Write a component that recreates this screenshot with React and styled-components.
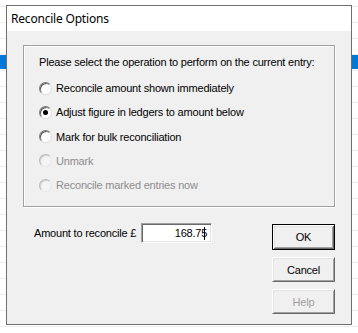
import React from 'react';
import styled, { createGlobalStyle } from 'styled-components';

const GlobalStyle = createGlobalStyle`
  html, body {
    margin: 0;
    padding: 0;
    background: #ffffff;
  }
  body {
    font-family: "Liberation Sans", Arial, sans-serif;
    font-size: 11px;
    letter-spacing: -0.2px;
    color: #000000;
  }
`;

const Desktop = styled.div`
  width: 358px;
  height: 333px;
  box-sizing: border-box;
  padding: 5px 0 0 6px;
  background:
    linear-gradient(#0078d7, #0078d7) 0 55px / 100% 14px no-repeat,
    repeating-linear-gradient(
      to bottom,
      #ececec 0px,
      #ececec 1px,
      #ffffff 1px,
      #ffffff 16px
    ) 0 6px / 100% 100%;
`;

const Dialog = styled.div`
  width: 346px;
  height: 320px;
  box-sizing: border-box;
  border: 1px solid #6f6f6f;
  background: #f0f0f0;
  display: flex;
  flex-direction: column;
`;

const TitleBar = styled.div`
  height: 25px;
  background: #ffffff;
  display: flex;
  align-items: center;
  padding-left: 4px;
  font-family: "Noto Sans", "Open Sans", sans-serif;
  font-size: 12px;
  letter-spacing: -0.2px;
  color: #000000;
`;

const Body = styled.div`
  flex: 1;
  padding: 14px 16px 0 16px;
  display: flex;
  flex-direction: column;
`;

const GroupBox = styled.div`
  height: 162px;
  box-sizing: border-box;
  border: 1px solid #a0a0a0;
  box-shadow: inset 1px 1px #ffffff, 1px 1px #ffffff;
  padding: 8px 0 0 15px;
  display: flex;
  flex-direction: column;
`;

const Heading = styled.div`
  height: 16px;
  line-height: 16px;
  white-space: nowrap;
`;

const OptionList = styled.div`
  margin-top: 10px;
  display: flex;
  flex-direction: column;
  gap: 8.3px;
`;

const Option = styled.label`
  height: 16px;
  display: flex;
  align-items: center;
  gap: 4px;
  color: ${(p) => (p.disabled ? '#8d8d8d' : '#000000')};
  white-space: nowrap;
`;

const RadioCircle = styled.span`
  width: 13px;
  height: 13px;
  box-sizing: border-box;
  border-radius: 50%;
  border: 1px solid;
  border-color: ${(p) =>
    p.disabled ? '#b8b8b8 #e6e6e6 #e6e6e6 #b8b8b8' : '#7a7a7a #dcdcdc #dcdcdc #7a7a7a'};
  box-shadow: ${(p) =>
    p.disabled ? 'inset 1px 1px #d4d4d4' : 'inset 1px 1px #5a5a5a'};
  background: ${(p) => (p.disabled ? '#f4f4f4' : '#ffffff')};
  display: flex;
  align-items: center;
  justify-content: center;
  flex-shrink: 0;

  &::after {
    content: '';
    display: ${(p) => (p.checked ? 'block' : 'none')};
    width: 5px;
    height: 5px;
    border-radius: 50%;
    background: #000000;
  }
`;

const Footer = styled.div`
  margin-top: 16px;
  display: flex;
  justify-content: space-between;
  align-items: flex-start;
`;

const AmountRow = styled.div`
  display: flex;
  align-items: center;
  padding-left: 11px;
  gap: 5px;
`;

const AmountField = styled.div`
  position: relative;
  width: 71px;
  height: 20px;
  box-sizing: border-box;
  border: 1px solid;
  border-color: #a0a0a0 #ffffff #ffffff #a0a0a0;
  box-shadow: inset 1px 1px #696969, inset -1px -1px #e3e3e3;
  background: #ffffff;
  display: flex;
  align-items: center;
  justify-content: flex-end;
  padding-right: 4px;
`;

const Caret = styled.span`
  position: absolute;
  right: 6px;
  top: 3px;
  width: 1px;
  height: 13px;
  background: #000000;
`;

const ButtonColumn = styled.div`
  display: flex;
  flex-direction: column;
  gap: 7px;
  margin-top: 1px;
`;

const Button = styled.button`
  width: 63px;
  height: ${(p) => (p.$default ? '26px' : '25px')};
  margin: 0;
  padding: 0;
  box-sizing: border-box;
  font-family: "Liberation Sans", Arial, sans-serif;
  font-size: 11px;
  letter-spacing: -0.2px;
  background: #f0f0f0;
  color: ${(p) => (p.disabled ? '#a0a0a0' : '#000000')};
  border: 1px solid;
  border-color: ${(p) => (p.$default ? '#000000' : '#ffffff #696969 #696969 #ffffff')};
  box-shadow: ${(p) =>
    p.$default
      ? 'inset 1px 1px #ffffff, inset -1px -1px #696969, inset 2px 2px #e3e3e3, inset -2px -2px #a0a0a0'
      : 'inset 1px 1px #e3e3e3, inset -1px -1px #a0a0a0'};
  cursor: default;
`;

const options = [
  { label: 'Reconcile amount shown immediately' },
  { label: 'Adjust figure in ledgers to amount below', checked: true },
  { label: 'Mark for bulk reconciliation' },
  { label: 'Unmark', disabled: true },
  { label: 'Reconcile marked entries now', disabled: true },
];

const App = () => {
  return (
    <>
      <GlobalStyle />
      <Desktop>
        <Dialog>
          <TitleBar>Reconcile Options</TitleBar>
          <Body>
            <GroupBox>
              <Heading>Please select the operation to perform on the current entry:</Heading>
              <OptionList>
                {options.map((o) => (
                  <Option key={o.label} disabled={o.disabled}>
                    <RadioCircle checked={o.checked} disabled={o.disabled} />
                    {o.label}
                  </Option>
                ))}
              </OptionList>
            </GroupBox>
            <Footer>
              <AmountRow>
                <span>Amount to reconcile £</span>
                <AmountField>
                  168.75
                  <Caret />
                </AmountField>
              </AmountRow>
              <ButtonColumn>
                <Button $default>OK</Button>
                <Button>Cancel</Button>
                <Button disabled>Help</Button>
              </ButtonColumn>
            </Footer>
          </Body>
        </Dialog>
      </Desktop>
    </>
  );
};

export default App;
